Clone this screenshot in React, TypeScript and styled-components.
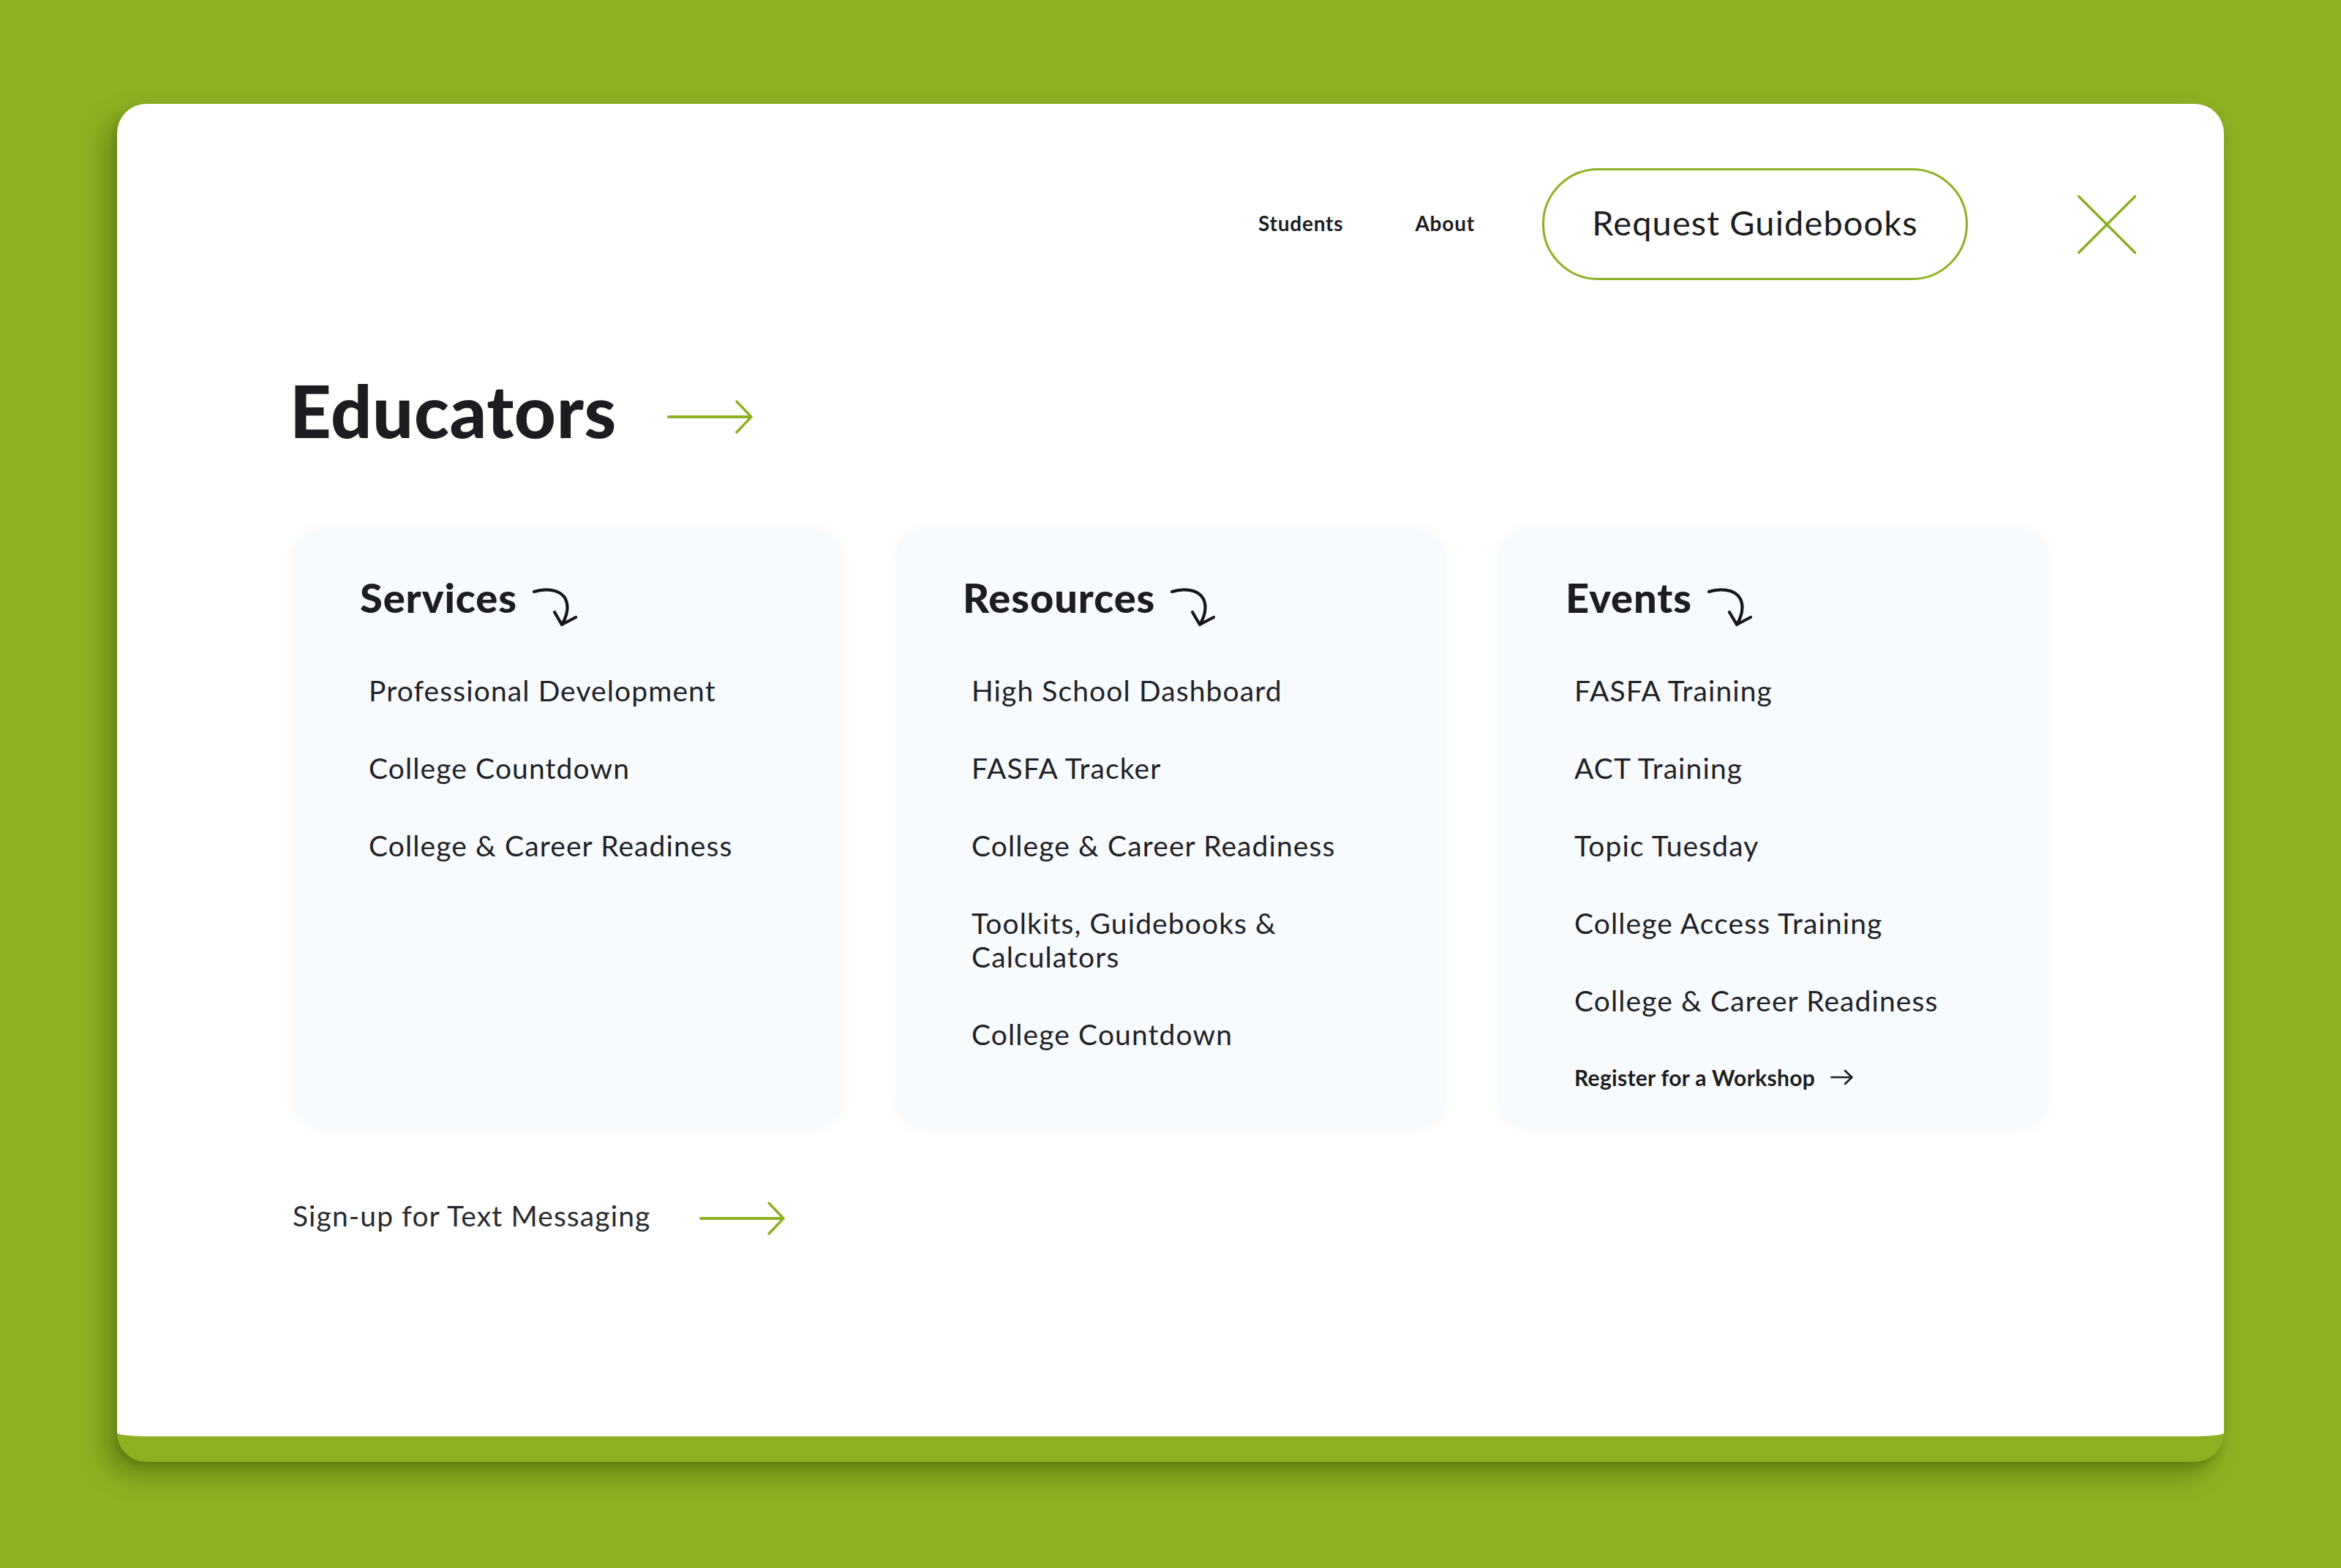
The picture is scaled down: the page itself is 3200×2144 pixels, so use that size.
import React from "react";
import styled, { createGlobalStyle } from "styled-components";

const GREEN = "#8db022";
const INK = "#1c1d21";

const GlobalStyle = createGlobalStyle`
  html, body {
    margin: 0;
    padding: 0;
    background: ${GREEN};
  }
  body {
    font-family: Lato, "Open Sans", sans-serif;
    -webkit-font-smoothing: antialiased;
  }
  *, *::before, *::after { box-sizing: border-box; }
`;

const Page = styled.div`
  width: 3200px;
  height: 2144px;
  padding: 142px 160px 0;
  background: ${GREEN};
  overflow: hidden;
`;

const Panel = styled.div`
  height: 1857px;
  background: #ffffff;
  border-radius: 40px;
  border-bottom: 35px solid ${GREEN};
  box-shadow: -16px 18px 34px rgba(58, 80, 0, 0.42), -2px 6px 8px rgba(58, 80, 0, 0.25);
  padding: 89px 120px 0 240px;
  display: flex;
  flex-direction: column;
`;

const TopBar = styled.header`
  display: flex;
  align-items: center;
  justify-content: flex-end;
  height: 151px;
`;

const NavList = styled.nav`
  display: flex;
  align-items: center;
  gap: 98px;
  padding-bottom: 4px;
`;

const NavLink = styled.a`
  font-family: Lato, sans-serif;
  font-weight: 700;
  font-size: 28px;
  letter-spacing: 0.8px;
  color: ${INK};
  text-decoration: none;
`;

const PillButton = styled.button`
  margin-left: 92px;
  width: 582px;
  height: 153px;
  padding: 0 0 5px;
  border: 3px solid ${GREEN};
  border-radius: 77px;
  background: #fff;
  font-family: Lato, sans-serif;
  font-weight: 400;
  font-size: 47px;
  letter-spacing: 1.1px;
  color: ${INK};
  cursor: pointer;
`;

const CloseButton = styled.button`
  margin-left: 150px;
  width: 80px;
  height: 80px;
  padding: 0;
  border: 0;
  background: transparent;
  display: flex;
  cursor: pointer;
`;

const TitleRow = styled.div`
  margin-top: 120px;
  display: flex;
  align-items: center;
  gap: 69px;
`;

const Title = styled.h1`
  margin: 0 0 0 -4px;
  font-family: Lato, sans-serif;
  font-weight: 900;
  font-size: 99px;
  line-height: 1.2;
  letter-spacing: 0.7px;
  color: ${INK};
`;

const LongArrowSvg = styled.svg<{ $nudge: number }>`
  display: block;
  margin-top: ${(p) => p.$nudge}px;
  flex: none;
`;

const Columns = styled.div`
  margin-top: 102px;
  display: grid;
  grid-template-columns: repeat(3, 752px);
  column-gap: 72px;
  align-items: stretch;
`;

const Column = styled.section`
  background: #f8fbfe;
  border-radius: 40px;
  box-shadow: 0 0 18px rgba(40, 70, 120, 0.035);
  padding: 60px 50px 53px 92px;
  display: flex;
  flex-direction: column;
`;

const ColumnHead = styled.div`
  display: flex;
  align-items: flex-start;
  gap: 18px;
`;

const ColumnTitle = styled.h2`
  margin: 0;
  font-family: Lato, sans-serif;
  font-weight: 900;
  font-size: 56px;
  line-height: 1.2;
  letter-spacing: 0.9px;
  color: ${INK};
`;

const CurlSvg = styled.svg`
  display: block;
  margin-top: 18px;
  flex: none;
`;

const ItemList = styled.ul`
  margin: 62px 0 0 12px;
  padding: 0;
  list-style: none;
  display: flex;
  flex-direction: column;
  gap: 60px;
`;

const Item = styled.li`
  max-width: 560px;
  font-family: Lato, sans-serif;
  font-weight: 400;
  font-size: 39px;
  line-height: 46px;
  letter-spacing: 1.1px;
  color: #1f2227;
`;

const SmallLink = styled.a`
  margin: 64px 0 0 12px;
  display: flex;
  align-items: center;
  gap: 21px;
  font-family: Lato, sans-serif;
  font-weight: 700;
  font-size: 30px;
  line-height: 36px;
  letter-spacing: 0.3px;
  color: ${INK};
  text-decoration: none;
`;

const SignupRow = styled.div`
  margin-top: 91px;
  display: flex;
  align-items: center;
  gap: 67px;
`;

const SignupText = styled.a`
  font-family: Lato, sans-serif;
  font-weight: 400;
  font-size: 39px;
  line-height: 46px;
  letter-spacing: 1.1px;
  color: #2a2b30;
  text-decoration: none;
`;

const LongArrow = ({ nudge }: { nudge: number }) => (
  <LongArrowSvg $nudge={nudge} width="118" height="46" viewBox="0 0 118 46" fill="none">
    <path d="M2 23 H114" stroke={GREEN} strokeWidth="4" strokeLinecap="round" />
    <path d="M95 2 L115 23 L95 44" stroke={GREEN} strokeWidth="3.5" strokeLinecap="round" strokeLinejoin="round" />
  </LongArrowSvg>
);

const Curl = () => (
  <CurlSvg width="67" height="58" viewBox="0 0 67 58" fill="none">
    <path
      d="M5 8 C 18 4, 40 3, 48 18 C 53 28, 50 42, 43 53"
      stroke="#16171a"
      strokeWidth="4.2"
      strokeLinecap="round"
    />
    <path d="M33 36 L43 53 L62 43" stroke="#16171a" strokeWidth="4.2" strokeLinecap="round" strokeLinejoin="round" />
  </CurlSvg>
);

const SmallArrow = () => (
  <svg width="32" height="24" viewBox="0 0 32 24" fill="none" style={{ display: "block" }}>
    <path d="M1.5 12 H29" stroke={INK} strokeWidth="2.6" strokeLinecap="round" />
    <path d="M20 3 L29.5 12 L20 21" stroke={INK} strokeWidth="2.6" strokeLinecap="round" strokeLinejoin="round" />
  </svg>
);

const CloseIcon = () => (
  <svg width="80" height="80" viewBox="0 0 80 80" fill="none">
    <path d="M1.5 1.5 L78.5 78.5 M78.5 1.5 L1.5 78.5" stroke="#8aae20" strokeWidth="3.4" strokeLinecap="round" />
  </svg>
);

type Section = { title: string; items: string[]; link?: string };

const sections: Section[] = [
  {
    title: "Services",
    items: ["Professional Development", "College Countdown", "College & Career Readiness"],
  },
  {
    title: "Resources",
    items: [
      "High School Dashboard",
      "FASFA Tracker",
      "College & Career Readiness",
      "Toolkits, Guidebooks & Calculators",
      "College Countdown",
    ],
  },
  {
    title: "Events",
    items: [
      "FASFA Training",
      "ACT Training",
      "Topic Tuesday",
      "College Access Training",
      "College & Career Readiness",
    ],
    link: "Register for a Workshop",
  },
];

export default function App() {
  return (
    <>
      <GlobalStyle />
      <Page>
        <Panel>
          <TopBar>
            <NavList>
              <NavLink href="#">Students</NavLink>
              <NavLink href="#">About</NavLink>
            </NavList>
            <PillButton type="button">Request Guidebooks</PillButton>
            <CloseButton type="button" aria-label="Close">
              <CloseIcon />
            </CloseButton>
          </TopBar>

          <TitleRow>
            <Title>Educators</Title>
            <LongArrow nudge={18} />
          </TitleRow>

          <Columns>
            {sections.map((s) => (
              <Column key={s.title}>
                <ColumnHead>
                  <ColumnTitle>{s.title}</ColumnTitle>
                  <Curl />
                </ColumnHead>
                <ItemList>
                  {s.items.map((it) => (
                    <Item key={it}>{it}</Item>
                  ))}
                </ItemList>
                {s.link && (
                  <SmallLink href="#">
                    {s.link}
                    <SmallArrow />
                  </SmallLink>
                )}
              </Column>
            ))}
          </Columns>

          <SignupRow>
            <SignupText href="#">Sign-up for Text Messaging</SignupText>
            <LongArrow nudge={8} />
          </SignupRow>
        </Panel>
      </Page>
    </>
  );
}
